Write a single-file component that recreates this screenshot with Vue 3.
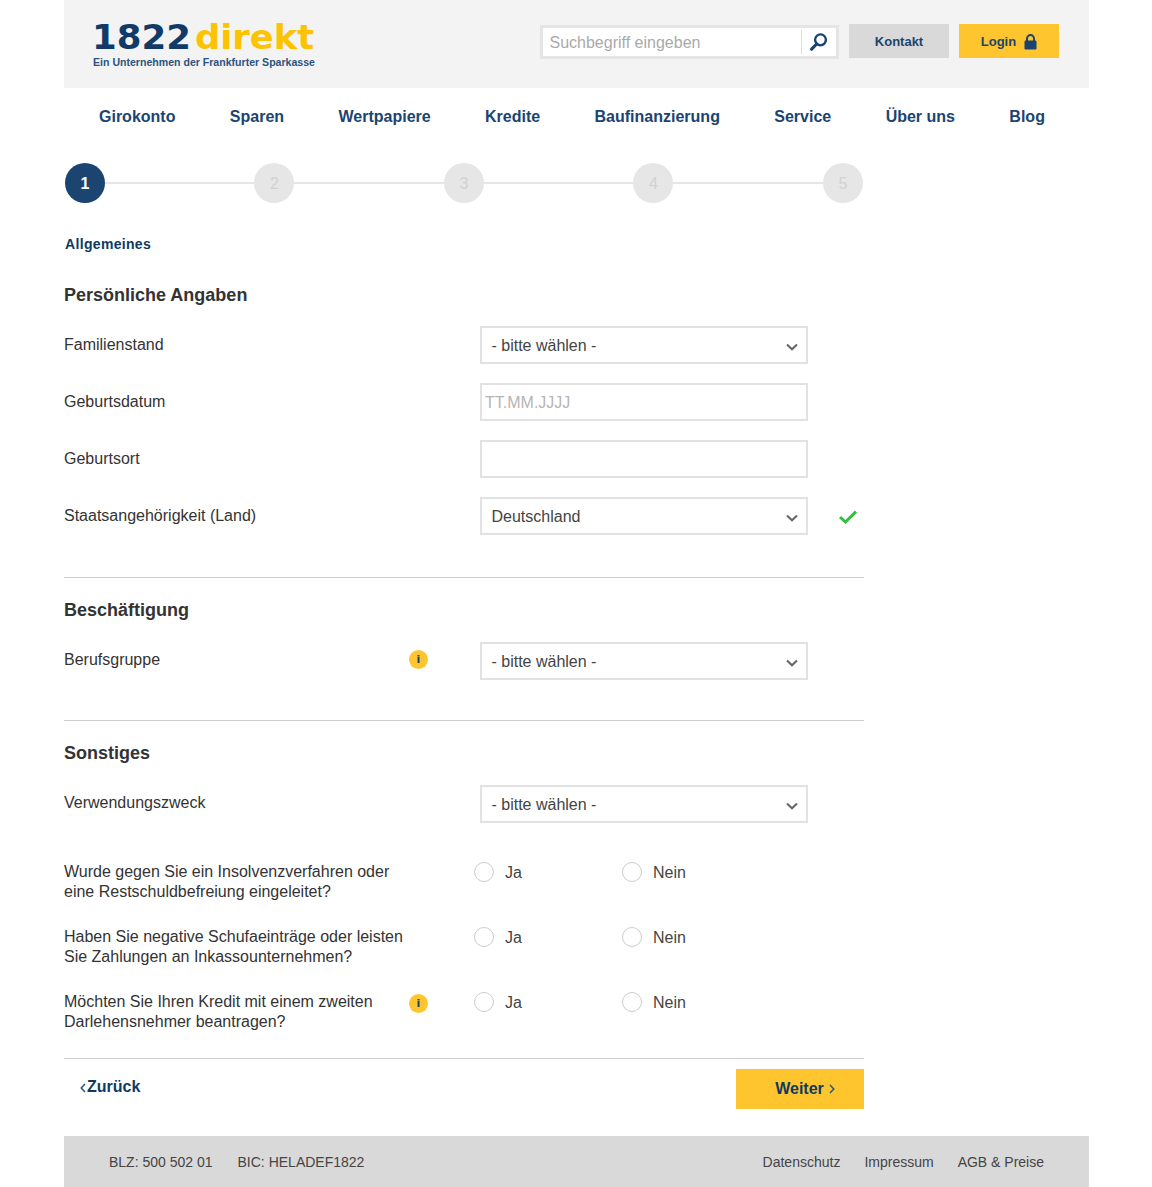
<script setup>
const nav = ['Girokonto', 'Sparen', 'Wertpapiere', 'Kredite', 'Baufinanzierung', 'Service', 'Über uns', 'Blog']
const steps = [1, 2, 3, 4, 5]
const questions = [
  { lines: ['Wurde gegen Sie ein Insolvenzverfahren oder', 'eine Restschuldbefreiung eingeleitet?'], info: false },
  { lines: ['Haben Sie negative Schufaeinträge oder leisten', 'Sie Zahlungen an Inkassounternehmen?'], info: false },
  { lines: ['Möchten Sie Ihren Kredit mit einem zweiten', 'Darlehensnehmer beantragen?'], info: true },
]
</script>

<template>
  <div class="page">
    <header class="header">
      <div class="logo">
        <svg width="224" height="60" viewBox="0 0 224 60" aria-label="1822direkt">
          <text x="-1" y="38.5" textLength="99" lengthAdjust="spacingAndGlyphs" class="logo-num">1822</text>
          <text x="102" y="38.5" textLength="119" lengthAdjust="spacingAndGlyphs" class="logo-dir">direkt</text>
          <text x="0" y="56" textLength="222" lengthAdjust="spacingAndGlyphs" class="logo-sub">Ein Unternehmen der Frankfurter Sparkasse</text>
        </svg>
      </div>
      <div class="search">
        <span class="search-text">Suchbegriff eingeben</span>
        <span class="search-btn">
          <svg width="20" height="20" viewBox="0 0 20 20">
            <circle cx="11.5" cy="7.8" r="5.4" fill="none" stroke="#1b4470" stroke-width="2.4" />
            <path d="M7.6 12 L2.6 17.2" stroke="#1b4470" stroke-width="3.2" stroke-linecap="round" />
          </svg>
        </span>
      </div>
      <a class="btn-contact">Kontakt</a>
      <a class="btn-login">
        Login
        <svg width="13" height="16" viewBox="0 0 13 16">
          <path d="M3 7V4.6a3.5 3.5 0 0 1 7 0V7" fill="none" stroke="#1b4470" stroke-width="2" />
          <rect x="0.5" y="6.5" width="12" height="9" rx="1.2" fill="#1b4470" />
        </svg>
      </a>
    </header>

    <nav class="nav">
      <a v-for="n in nav" :key="n">{{ n }}</a>
    </nav>

    <main class="form">
      <div class="steps">
        <template v-for="s in steps" :key="s">
          <span class="step" :class="{ active: s === 1 }">{{ s }}</span>
          <span v-if="s < 5" class="step-line"></span>
        </template>
      </div>
      <div class="step-label">Allgemeines</div>

      <h2 class="first">Persönliche Angaben</h2>
      <div class="row low">
        <label>Familienstand</label>
        <div class="select">- bitte wählen -<svg class="chev" width="12" height="8" viewBox="0 0 12 8"><path d="M1 1.5 L6 6.3 L11 1.5" /></svg></div>
      </div>
      <div class="row low">
        <label>Geburtsdatum</label>
        <div class="input placeholder">TT.MM.JJJJ</div>
      </div>
      <div class="row low">
        <label>Geburtsort</label>
        <div class="input"></div>
      </div>
      <div class="row low last">
        <label>Staatsangehörigkeit (Land)</label>
        <div class="select">Deutschland<svg class="chev" width="12" height="8" viewBox="0 0 12 8"><path d="M1 1.5 L6 6.3 L11 1.5" /></svg></div>
        <svg class="check" width="20" height="16" viewBox="0 0 20 16"><path d="M2 8 L7.4 13 L18 2.6" /></svg>
      </div>

      <hr class="rule" />
      <h2>Beschäftigung</h2>
      <div class="row last">
        <label>Berufsgruppe</label>
        <span class="info">i</span>
        <div class="select">- bitte wählen -<svg class="chev" width="12" height="8" viewBox="0 0 12 8"><path d="M1 1.5 L6 6.3 L11 1.5" /></svg></div>
      </div>

      <hr class="rule tight" />
      <h2>Sonstiges</h2>
      <div class="row purpose">
        <label>Verwendungszweck</label>
        <div class="select">- bitte wählen -<svg class="chev" width="12" height="8" viewBox="0 0 12 8"><path d="M1 1.5 L6 6.3 L11 1.5" /></svg></div>
      </div>

      <div v-for="(q, i) in questions" :key="i" class="question">
        <div class="q-text">
          <div v-for="l in q.lines" :key="l">{{ l }}</div>
        </div>
        <span v-if="q.info" class="info">i</span>
        <div class="radios">
          <span class="radio"><i></i>Ja</span>
          <span class="radio"><i></i>Nein</span>
        </div>
      </div>

      <hr class="rule bottom" />
      <div class="actions">
        <a class="back">
          <svg width="6" height="10" viewBox="0 0 6 10"><path d="M5 1 L1.2 5 L5 9" /></svg>Zurück
        </a>
        <a class="next">
          Weiter
          <svg width="6" height="10" viewBox="0 0 6 10"><path d="M1 1 L4.8 5 L1 9" /></svg>
        </a>
      </div>
    </main>

    <footer class="footer">
      <div class="foot-left"><span>BLZ: 500 502 01</span><span>BIC: HELADEF1822</span></div>
      <div class="foot-right"><a>Datenschutz</a><a>Impressum</a><a>AGB &amp; Preise</a></div>
    </footer>
  </div>
</template>

<style scoped>
.page {
  width: 1025px;
  margin-left: 64px;
  font-family: "Liberation Sans", Arial, sans-serif;
  font-size: 16px;
  color: #333;
}
.header {
  height: 88px;
  background: #f3f3f3;
  display: flex;
  align-items: flex-start;
  padding: 0 30px 0 29px;
}
.logo {
  height: 60px;
  margin-top: 10px;
  margin-right: auto;
}
.logo-num {
  font: 700 34px "DejaVu Sans", sans-serif;
  fill: #113a68;
}
.logo-dir {
  font: 700 34px "DejaVu Sans", sans-serif;
  fill: #fdc300;
}
.logo-sub {
  font: 700 10.5px "Liberation Sans", sans-serif;
  fill: #2b5480;
}
.search {
  width: 299px;
  height: 34px;
  box-sizing: border-box;
  margin-top: 25px;
  border: 3px solid #e5e5e5;
  background: #fff;
  display: flex;
  align-items: center;
  justify-content: space-between;
  margin-right: 10px;
}
.search-text {
  color: #aaa;
  font-size: 16px;
  padding-left: 6.5px;
  padding-top: 2px;
}
.search-btn {
  width: 34px;
  height: 24px;
  border-left: 1px solid #ddd;
  display: flex;
  align-items: center;
  justify-content: center;
}
.btn-contact,
.btn-login {
  margin-top: 24px;
  height: 34px;
  padding-top: 1px;
  box-sizing: border-box;
  font-size: 13px;
  font-weight: 700;
  color: #1b4470;
  display: flex;
  align-items: center;
  justify-content: center;
}
.btn-contact {
  width: 100px;
  background: #d9d9d9;
  margin-right: 10px;
}
.btn-login {
  width: 100px;
  background: #ffc52e;
  gap: 8px;
}
.nav {
  height: 57px;
  display: flex;
  justify-content: space-between;
  align-items: center;
  padding: 0 44px 0 35px;
  font-size: 16px;
  font-weight: 700;
  color: #1b4470;
}
.form {
  width: 800px;
}
.steps {
  display: flex;
  align-items: center;
  height: 40px;
  width: 798.1px;
  margin-top: 18px;
  padding-left: 0.9px;
}
.step {
  width: 40px;
  height: 40px;
  flex: none;
  box-sizing: border-box;
  padding-top: 1px;
  border-radius: 50%;
  background: #e6e6e6;
  color: #d2d2d2;
  font-size: 16px;
  display: flex;
  align-items: center;
  justify-content: center;
}
.step.active {
  background: #1b4470;
  color: #fff;
  font-weight: 700;
}
.step-line {
  flex: 1;
  height: 2px;
  background: #e6e6e6;
}
.step-label {
  margin-top: 33px;
  padding-left: 1px;
  font-size: 14px;
  line-height: 16px;
  font-weight: 700;
  color: #0d3a63;
  letter-spacing: 0.33px;
}
h2 {
  margin: 0;
  font-size: 18px;
  line-height: 22px;
  font-weight: 700;
  color: #333;
  margin-top: 21px;
  margin-bottom: 21px;
}
h2.first {
  margin-top: 32px;
  margin-bottom: 20px;
}
.row {
  display: flex;
  align-items: flex-start;
  height: 38px;
  margin-bottom: 19px;
  position: relative;
}
.row.last {
  margin-bottom: 0;
}
.row.purpose {
  margin-bottom: 40px;
}
.row label {
  width: 416px;
  flex: none;
  line-height: 18px;
  padding-top: 9px;
}
.row.low label {
  padding-top: 10px;
}
.row .info {
  position: absolute;
  left: 345px;
  top: 8px;
}
.select,
.input {
  width: 328px;
  height: 38px;
  box-sizing: border-box;
  border: 2px solid #e2e2e2;
  background: #fff;
  line-height: 36px;
  position: relative;
}
.select {
  padding-left: 9.5px;
  color: #444;
}
.chev {
  position: absolute;
  right: 8px;
  top: 15px;
}
.chev path {
  fill: none;
  stroke: #666;
  stroke-width: 2;
}
.placeholder {
  color: #b5b5b5;
  padding-left: 3px;
}
.check {
  position: absolute;
  left: 774px;
  top: 12px;
}
.check path {
  fill: none;
  stroke: #2fc13e;
  stroke-width: 3;
}
.rule {
  border: 0;
  height: 1px;
  background: #ccc;
  margin: 42px 0 0;
}
.rule.tight {
  margin-top: 40px;
}
.rule.bottom {
  margin-top: 0;
}
.info {
  width: 19px;
  height: 19px;
  border-radius: 50%;
  background: #ffc52e;
  color: #1b4470;
  font: 700 11px/19px "DejaVu Sans", sans-serif;
  text-align: center;
}
.question {
  display: flex;
  height: 65px;
  position: relative;
  line-height: 20px;
}
.question .info {
  position: absolute;
  left: 345px;
  top: 1px;
}
.q-text {
  width: 410px;
  flex: none;
  margin-top: -1px;
}
.radios {
  display: flex;
}
.radio {
  width: 148px;
  display: flex;
  align-items: center;
  height: 20px;
  color: #444;
  line-height: 20px;
}
.radio i {
  width: 20px;
  height: 20px;
  box-sizing: border-box;
  border: 1px solid #ccc;
  border-radius: 50%;
  margin-right: 11px;
  background: #fff;
  position: relative;
  top: -1px;
}
.actions {
  display: flex;
  justify-content: space-between;
  align-items: flex-start;
  padding-top: 10px;
  height: 77px;
  box-sizing: border-box;
}
.back {
  margin-left: 16px;
  margin-top: 9px;
  font-weight: 700;
  color: #0d3a63;
  line-height: 18px;
  display: flex;
  align-items: center;
  gap: 1px;
}
.back svg path,
.next svg path {
  fill: none;
  stroke: #2b5480;
  stroke-width: 1.5;
}
.back svg {
  margin-top: 2px;
}
.next {
  width: 128px;
  height: 40px;
  box-sizing: border-box;
  padding-left: 10px;
  background: #ffc52e;
  color: #0d3a63;
  font-weight: 700;
  display: flex;
  align-items: center;
  justify-content: center;
  gap: 5px;
}
.footer {
  height: 51px;
  background: #d9d9d9;
  display: flex;
  align-items: center;
  justify-content: space-between;
  padding: 0 45px;
  font-size: 14px;
  color: #444;
}
.foot-left {
  display: flex;
  gap: 25px;
}
.foot-right {
  display: flex;
  gap: 24px;
}
</style>
